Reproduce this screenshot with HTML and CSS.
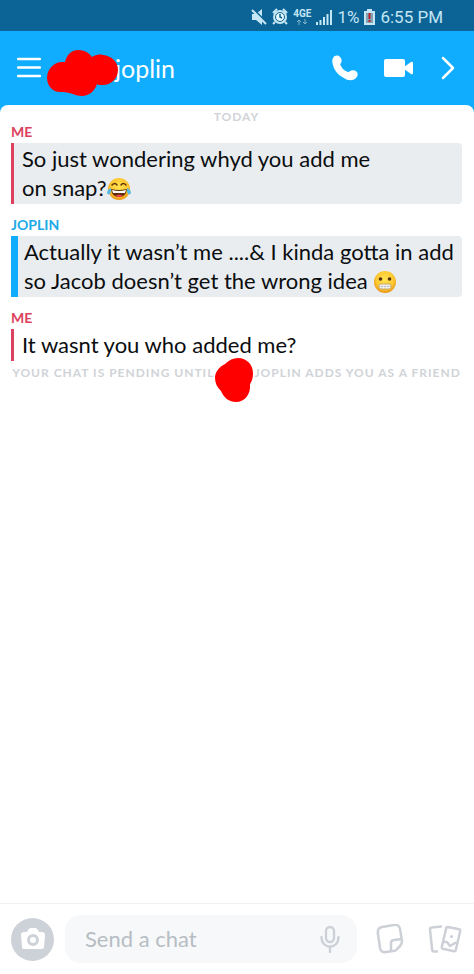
FILE: index.html
```html
<!DOCTYPE html>
<html lang="en">
<head>
<meta charset="utf-8">
<meta name="viewport" content="width=device-width, initial-scale=1">
<title>Chat</title>
<link rel="stylesheet" href="styles.css">
</head>
<body>
<div class="status">
  <svg width="16" height="18" viewBox="0 0 16 18" aria-hidden="true"><path d="M1 6h4l6-5v16l-6-5H1z" fill="#c4e6f5"/><path d="M1 0l15 15" stroke="#0b6495" stroke-width="2"/><path d="M1 2l14 14" stroke="#c4e6f5" stroke-width="2"/></svg>
  <svg width="16" height="18" viewBox="0 0 16 18" aria-hidden="true"><circle cx="8" cy="9" r="7" fill="#c4e6f5"/><path d="M1 5l4-4M15 5l-4-4M3 14l-2 2M13 14l2 2" stroke="#c4e6f5" stroke-width="2"/><circle cx="8" cy="9" r="4.500" fill="#e6f6fc" stroke="#0b6495" stroke-width="1"/><path d="M8 6v3l2 1" fill="none" stroke="#0b6495" stroke-width="1.500"/></svg>
  <span class="network"><b>4GE</b><svg width="10" height="6" viewBox="0 0 10 6" aria-hidden="true"><path d="M2 6V1M0 3l2-2 2 2M8 0v5M6 3l2 2 2-2" fill="none" stroke="#7fb4cf"/></svg></span>
  <svg class="signal" width="16" height="16" viewBox="0 0 16 16" aria-hidden="true"><path d="M1 16v-3M4.500 16v-5M8 16V8M11.500 16V5M15 16V1" stroke="#c4e6f5" stroke-width="2"/></svg>
  <span>1%</span>
  <svg width="11" height="16" viewBox="0 0 11 16" aria-hidden="true"><path d="M3 0h5v2h3v14H0V2h3z" fill="#c4e6f5"/><path d="M2 4h7v10H2z" fill="#83a4b3"/><path d="M5.500 4v6M5.500 11v2" stroke="#b8202c" stroke-width="2"/></svg>
  <span>6:55 PM</span>
</div>

<header class="header">
  <button class="icon-button" aria-label="Menu"><svg width="24" height="22" viewBox="0 0 24 22"><path d="M1 2h22M1 10.500h22M1 19h22" stroke="#fff" stroke-width="2.400" stroke-linecap="round"/></svg></button>
  <h1 class="title">joplin
    <svg class="title-mask" width="72" height="46" viewBox="0 0 72 46" aria-hidden="true"><path d="M15 12h3C20 4 25 0 31 0c7 0 11 3 14 7 3-2 7-3 11-2 9 1 15 7 15 15 0 9-8 16-17 15-2 0-3 0-4-1-2 7-8 12-15 12-7 0-11-4-20-4C6 43 0 36 0 28 0 19 7 12 15 12z" fill="#f00"/></svg>
  </h1>
  <button class="icon-button" aria-label="Call"><svg width="26" height="26" viewBox="0 0 26 26"><path d="M1 3C3 0 6 0 8 2s2 4 1 6c-1 1-1 2 0 3 1 3 4 5 7 6 1 0 1 0 2-1 2-1 5-1 7 1 1 2 1 4-1 6-3 3-8 3-12 0C6 20 2 15 1 10 0 7 0 5 1 3z" fill="#fff"/></svg></button>
  <button class="icon-button video" aria-label="Video call"><svg width="30" height="20" viewBox="0 0 30 20"><rect x="1" y="1" width="21" height="18" rx="2" fill="#fff"/><path d="M21 9l7-5q2-1 2 1v10q0 2-2 1l-7-5z" fill="#fff"/></svg></button>
  <button class="icon-button" aria-label="Next"><svg width="14" height="24" viewBox="0 0 14 24"><path d="M2 2l10 10L2 22" fill="none" stroke="#fff" stroke-width="2.500" stroke-linecap="round" stroke-linejoin="round"/></svg></button>
</header>

<main class="sheet">
  <div class="day">TODAY</div>
  <section class="group me">
    <h2 class="sender">ME</h2>
    <p class="message saved">So just wondering whyd you add me<br>on snap?<svg class="emoji" role="img" aria-label="Face with tears of joy" viewBox="0 0 24 24"><defs><radialGradient id="face" cx="50%" cy="40%" r="60%"><stop offset="0" stop-color="#ffe44f"/><stop offset=".65" stop-color="#fdc832"/><stop offset="1" stop-color="#e99518"/></radialGradient></defs><circle cx="12" cy="12" r="11" fill="url(#face)"/><path d="M5 8q3-3 5 0M14 8q2-3 5 0" fill="none" stroke="#65340b" stroke-width="1.500" stroke-linecap="round"/><path d="M4 12q8 2 16 0-1 8-8 8t-8-8z" fill="#5f2b09"/><path d="M5 13q7 2 14 0l-1 3H6z" fill="#fff"/><path d="M8 19q4-3 8 0-4 2-8 0z" fill="#e7444d"/><path d="M4 11c-3 1-4 3-4 5 1 3 5 1 4-5zM20 11c3 1 4 3 4 5-1 3-5 1-4-5z" fill="#58b9e6"/></svg></p>
  </section>
  <section class="group friend">
    <h2 class="sender">JOPLIN</h2>
    <p class="message saved">Actually it wasn’t me ....&amp; I kinda gotta in add<br>so Jacob doesn’t get the wrong idea <svg class="emoji" role="img" aria-label="Grimacing face" viewBox="0 0 24 24"><circle cx="12" cy="12" r="11" fill="url(#face)"/><circle cx="7.500" cy="9" r="1.800" fill="#54300f"/><circle cx="16.500" cy="9" r="1.800" fill="#54300f"/><rect x="6" y="14" width="12" height="5" rx="2" fill="#fff" stroke="#c9a95f"/><path d="M6 16.500h12M9 14v5M12 14v5M15 14v5" stroke="#bbb" stroke-width=".7"/></svg></p>
  </section>
  <section class="group me">
    <h2 class="sender">ME</h2>
    <p class="message">It wasnt you who added me?</p>
  </section>
  <p class="pending"><span>YOUR CHAT IS PENDING UNTIL</span><svg width="38" height="44" viewBox="0 0 38 44" aria-hidden="true"><path d="M10 6c4-4 8-6 13-6 9 0 15 7 15 15 0 5-1 8-3 11 1 10-5 18-14 18-7 0-12-4-15-11C2 29 0 25 0 20 0 14 4 9 10 6z" fill="#f00"/></svg><span>JOPLIN ADDS YOU AS A FRIEND</span></p>
</main>

<footer class="composer">
  <button class="camera" aria-label="Camera"><svg width="26" height="22" viewBox="0 0 26 22"><path d="M8 2q1-2 3-2h4q2 0 3 2l1 2h3q3 0 3 3l-1 12q0 2-3 2H5q-3 0-3-2L1 7q0-3 3-3h3z" fill="#fff"/><circle cx="13" cy="12" r="4.500" fill="#fff" stroke="#cdd1d8" stroke-width="3"/></svg></button>
  <div class="field">
    <input class="input" type="text" placeholder="Send a chat" aria-label="Send a chat">
    <button class="icon-button" aria-label="Record voice"><svg width="20" height="28" viewBox="0 0 20 28" fill="none" stroke="#cdd1d7" stroke-width="2.300" stroke-linecap="round"><rect x="6" y="2" width="8" height="15" rx="4"/><path d="M1.500 12c0 13 17 13 17 0M10 22v5"/></svg></button>
  </div>
  <button class="icon-button stickers" aria-label="Stickers"><svg width="28" height="30" viewBox="0 0 28 30" fill="none" stroke="#cdd1d7" stroke-width="2.500" stroke-linejoin="round"><path d="M6 3l12-2q5-1 6 4l2 12q0 3-2 5l-3 3q-1 2-4 2l-7 1q-5 1-6-4L2 10Q1 4 6 3z"/><path d="M15 27v-8q0-3 3-3l8-1"/></svg></button>
  <button class="icon-button" aria-label="Cards"><svg width="34" height="28" viewBox="0 0 34 28" fill="none" stroke="#cdd1d7" stroke-width="2.500" stroke-linecap="round" stroke-linejoin="round"><path d="M13 1.500L4 2.500q-2 0-2 2l2 19q0 3 2 3h3"/><path d="M20 2l10 2q3 0 2 3l-4 17q0 3-3 2l-9-2q-3 0-2-3l4-17q0-2 2-2z"/><path d="M16 17l3 0 3 4 5-3h2"/><circle cx="23.500" cy="11.500" r="1" fill="#cdd1d7" stroke-width="1.200"/></svg></button>
</footer>
</body>
</html>
```
FILE: styles.css
```css
* { box-sizing: border-box; }

body {
  margin: 0;
  min-height: 100vh;
  display: flex;
  flex-direction: column;
  background: #10adff;
  color: #0b0d0f;
  font-family: Lato, "Noto Sans", sans-serif;
}

h1, h2, p { margin: 0; }

button {
  padding: 0;
  border: 0;
  background: none;
  cursor: pointer;
}

svg { display: block; flex: none; }

.status {
  height: 31px;
  padding: 2px 31px 0 0;
  display: flex;
  align-items: center;
  justify-content: flex-end;
  gap: 5px;
  background: #0b6495;
  color: #c4e6f5;
  font: 17px/20px Roboto, sans-serif;
}

.network {
  display: grid;
  justify-items: center;
  font-size: 10px;
  line-height: 10px;
}

.header {
  height: 74px;
  padding: 0 19px 0 17px;
  display: flex;
  align-items: center;
}

.icon-button { flex: none; }

.title {
  position: relative;
  flex: 1;
  padding-left: 74px;
  color: #fff;
  font-size: 25px;
  font-weight: 400;
  line-height: 32px;
}

.title-mask {
  position: absolute;
  left: 6px;
  top: -2px;
}

.video { margin: 0 28px 0 25px; }

.sheet {
  flex: 1;
  padding: 5px 12px 0 11px;
  border-radius: 8px 8px 0 0;
  background: #fff;
}

.day {
  color: #d0d3d8;
  font-size: 12px;
  font-weight: 700;
  line-height: 14px;
  letter-spacing: 1px;
  text-align: center;
}

.group { margin-bottom: 13px; }

.sender {
  margin-bottom: 4px;
  font-size: 14px;
  font-weight: 700;
  line-height: 15px;
}

.me { color: #dc4260; }
.friend { color: #20a9e8; }

.message {
  padding: 1px 0 2px 8px;
  border-left: 3px solid #dc4260;
  color: #0b0d0f;
  font-size: 22px;
  line-height: 29px;
}

.saved {
  border-radius: 0 4px 4px 0;
  background: #e9edf0;
}

.friend .message {
  padding-left: 6px;
  border-left: 7px solid #10adff;
}

.emoji {
  display: inline-block;
  width: 24px;
  height: 24px;
  vertical-align: -5px;
}

.pending {
  margin-top: -16px;
  display: flex;
  justify-content: center;
  gap: 1px;
  color: #d0d3d8;
  font-size: 12px;
  font-weight: 700;
  line-height: 16px;
  letter-spacing: 1px;
  white-space: nowrap;
}

.pending span { padding-top: 7px; }

.composer {
  height: 71px;
  padding: 0 12px 0 11px;
  display: flex;
  align-items: center;
  gap: 19px;
  border-top: 1px solid #f1f2f4;
  background: #fff;
}

.camera {
  width: 43px;
  height: 43px;
  flex: none;
  display: grid;
  place-items: center;
  border-radius: 50%;
  background: #cdd1d8;
}

.field {
  flex: 1;
  min-width: 0;
  height: 48px;
  margin-left: -8px;
  padding: 0 17px 0 20px;
  display: flex;
  align-items: center;
  border-radius: 16px;
  background: #f6f8fa;
}

.stickers { margin-right: 5px; }

.input {
  flex: 1;
  min-width: 0;
  padding: 0;
  border: 0;
  outline: 0;
  background: none;
  color: #0b0d0f;
  font: 22px/28px Lato, sans-serif;
}

.input::placeholder { color: #b7bdc3; opacity: 1; }
```
